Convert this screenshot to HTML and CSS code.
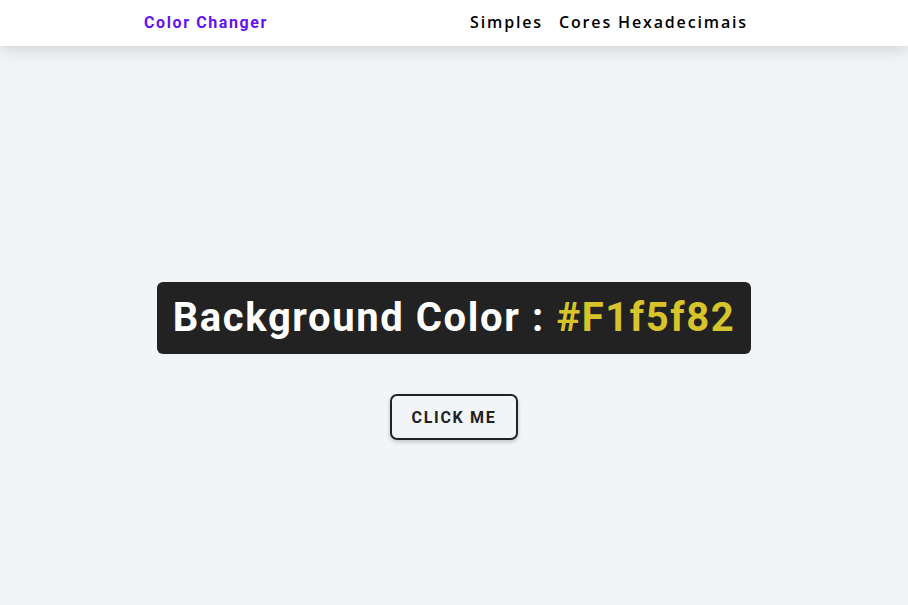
FILE: index.html
```html
<!DOCTYPE html>
<html lang="pt">
<head>
<meta charset="utf-8">
<title>Color Changer</title>
<link rel="stylesheet" href="styles.css">
</head>
<body>
<nav class="nav">
  <div class="nav-inner">
    <a class="logo" href="#">Color Changer</a>
    <ul class="links">
      <li><a href="#">Simples</a></li>
      <li><a href="#">Cores Hexadecimais</a></li>
    </ul>
  </div>
</nav>
<main class="main">
  <h2 class="label">Background Color : <span class="hex">#F1f5f82</span></h2>
  <button class="btn">Click Me</button>
</main>
</body>
</html>
```

FILE: styles.css
```css
* { box-sizing: border-box; margin: 0; padding: 0; }
html, body { height: 100%; }
body {
  background: #f1f5f8;
  font-family: Roboto, "Liberation Sans", sans-serif;
  color: #222;
}
.nav {
  height: 46px;
  background: #fff;
  box-shadow: 0 5px 15px rgba(0, 0, 0, 0.12);
  position: relative;
}
.nav-inner {
  height: 100%;
  display: flex;
  align-items: center;
  justify-content: space-between;
  padding: 0 160px 2px 144px;
}
.logo {
  color: #6610f2;
  font-weight: 700;
  font-size: 16px;
  letter-spacing: 1.6px;
  text-decoration: none;
}
.links {
  list-style: none;
  display: flex;
  gap: 16px;
}
.links a {
  font-family: "Open Sans", sans-serif;
  font-weight: 600;
  font-size: 16px;
  letter-spacing: 1.85px;
  color: #000;
  text-decoration: none;
}
.main {
  display: flex;
  flex-direction: column;
  align-items: center;
  padding-top: 236px;
}
.label {
  background: #222;
  color: #fff;
  font-size: 40px;
  font-weight: 700;
  letter-spacing: 1.6px;
  line-height: 72px;
  height: 72px;
  padding: 0 16px;
  border-radius: 6px;
}
.hex { color: #d6c42a; }
.btn {
  margin-top: 40px;
  width: 128px;
  height: 46px;
  background: transparent;
  border: 2px solid #222;
  border-radius: 7px;
  font-family: Roboto, "Liberation Sans", sans-serif;
  font-weight: 700;
  font-size: 16px;
  letter-spacing: 1.7px;
  text-transform: uppercase;
  color: #222;
  box-shadow: 0 2px 4px rgba(0, 0, 0, 0.2);
  cursor: pointer;
}
```
